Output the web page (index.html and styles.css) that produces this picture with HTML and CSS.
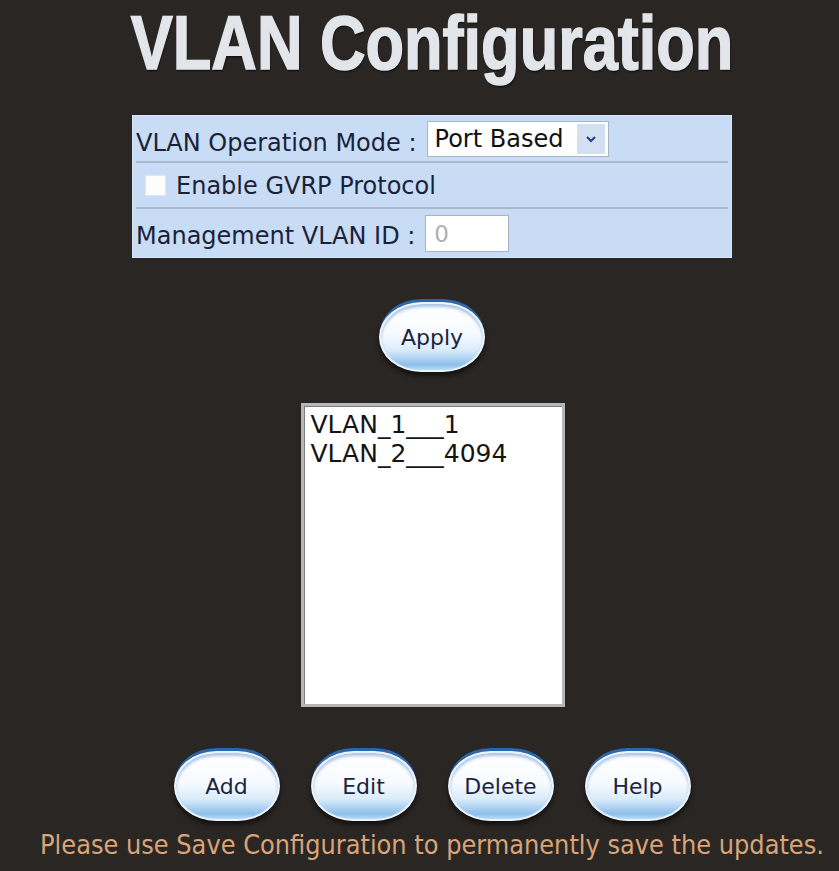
FILE: index.html
```html
<!DOCTYPE html>
<html>
<head>
<meta charset="utf-8">
<title>VLAN Configuration</title>
<link rel="stylesheet" href="styles.css">
</head>
<body>
<div class="page">
  <h1 class="title">VLAN Configuration</h1>
  <div class="panel">
    <div class="row row-mode">
      <span class="label">VLAN Operation Mode :</span>
      <div class="select">
        <span class="select-text">Port Based</span>
        <span class="select-arrow">
          <svg width="14" height="10" viewBox="0 0 14 10"><path d="M3 3 L7 7 L11 3" fill="none" stroke="#1d3f86" stroke-width="2"/></svg>
        </span>
      </div>
    </div>
    <div class="row row-gvrp">
      <span class="checkbox"></span>
      <span class="label">Enable GVRP Protocol</span>
    </div>
    <div class="row row-mgmt">
      <span class="label">Management VLAN ID :</span>
      <div class="textbox">0</div>
    </div>
  </div>
  <div class="apply-row">
    <button class="btn">Apply</button>
  </div>
  <div class="listbox">
    <div class="option">VLAN_1___1</div>
    <div class="option">VLAN_2___4094</div>
  </div>
  <div class="btn-row">
    <button class="btn">Add</button>
    <button class="btn">Edit</button>
    <button class="btn">Delete</button>
    <button class="btn">Help</button>
  </div>
  <p class="note">Please use Save Configuration to permanently save the updates.</p>
</div>
</body>
</html>
```

FILE: styles.css
```css
html, body {
  margin: 0;
  padding: 0;
  background: #2a2623;
  overflow: hidden;
}
.page {
  padding-left: 25px;
  display: flex;
  flex-direction: column;
  align-items: center;
  font-family: "DejaVu Sans", Verdana, sans-serif;
}
.title {
  margin: 0;
  font-family: "Liberation Sans", Arial, sans-serif;
  font-weight: bold;
  font-size: 76px;
  line-height: 86px;
  color: #e2e5ea;
  transform: scaleX(0.83);
  white-space: nowrap;
  -webkit-text-stroke: 1.5px #e2e5ea;
  text-shadow: 1px 2px 2px rgba(0,0,0,0.6);
}
.panel {
  margin-top: 29px;
  width: 600px;
  background: #c9dcf6;
  border: 1px solid #d7e4f6;
  box-sizing: border-box;
  padding: 0 3px;
}
.row {
  display: flex;
  align-items: center;
  color: #1a2238;
  font-size: 24px;
  border-bottom: 2px solid #aab8c9;
}
.row-mode { height: 45px; }
.row-gvrp { height: 44px; }
.row-mgmt { height: 48px; border-bottom: none; }
.label { white-space: nowrap; }
.row-mode .label { padding-top: 8px; }
.select {
  margin-left: 10px;
  width: 182px;
  height: 36px;
  box-sizing: border-box;
  background: #fff;
  border: 1px solid #a8b4c4;
  display: flex;
  align-items: center;
  justify-content: space-between;
  padding: 2px 3px 2px 7px;
}
.select-text { font-size: 24px; color: #111; }
.select-arrow {
  width: 28px;
  height: 30px;
  background: #d3e0f2;
  display: flex;
  align-items: center;
  justify-content: center;
}
.checkbox {
  width: 21px;
  height: 21px;
  background: #fdfdfd;
  margin: 0 10px 0 9px;
  box-shadow: inset 0 0 0 1px #dfe6ef;
}
.row-gvrp .label { padding-top: 2px; }
.row-mgmt .label { padding-top: 6px; }
.textbox {
  margin-left: 10px;
  width: 84px;
  height: 37px;
  box-sizing: border-box;
  background: #fff;
  border: 1px solid #a9b3c2;
  color: #b0b0b0;
  font-size: 23px;
  padding: 2px 0 0 8px;
  line-height: 32px;
}
.apply-row {
  margin-top: 44px;
  display: flex;
  justify-content: center;
}
.btn {
  width: 106px;
  height: 70px;
  border-radius: 40% / 50%;
  border: 2px solid #eaf4fd;
  background:
    linear-gradient(to bottom, #ffffff 0%, #f7fbff 45%, #d9ebfa 70%, #8dbfea 92%, #b9daf5 100%);
  box-shadow:
    0 -4px 0 -1px #2866ad,
    inset 0 3px 3px rgba(70,130,200,0.45),
    0 4px 5px rgba(0,0,0,0.55);
  font-family: "DejaVu Sans", Verdana, sans-serif;
  font-size: 22px;
  color: #1b2340;
  padding: 0;
  cursor: pointer;
}
.listbox {
  margin-top: 31px;
  width: 264px;
  height: 304px;
  box-sizing: border-box;
  background: #fff;
  border: 3px solid #b7b7b7;
  box-shadow: inset 1px 1px 0 #7d7d7d;
  padding: 4px 0 0 7px;
  margin-left: 1px;
}
.option {
  font-size: 25px;
  line-height: 29px;
  color: #141414;
  white-space: nowrap;
}
.btn-row {
  margin-top: 44px;
  display: flex;
  gap: 31px;
}
.note {
  margin: 8px 0 0;
  font-family: "DejaVu Sans Condensed", "DejaVu Sans", sans-serif;
  font-stretch: condensed;
  font-size: 26.8px;
  line-height: 32px;
  color: #d8a47a;
  white-space: nowrap;
}
```
